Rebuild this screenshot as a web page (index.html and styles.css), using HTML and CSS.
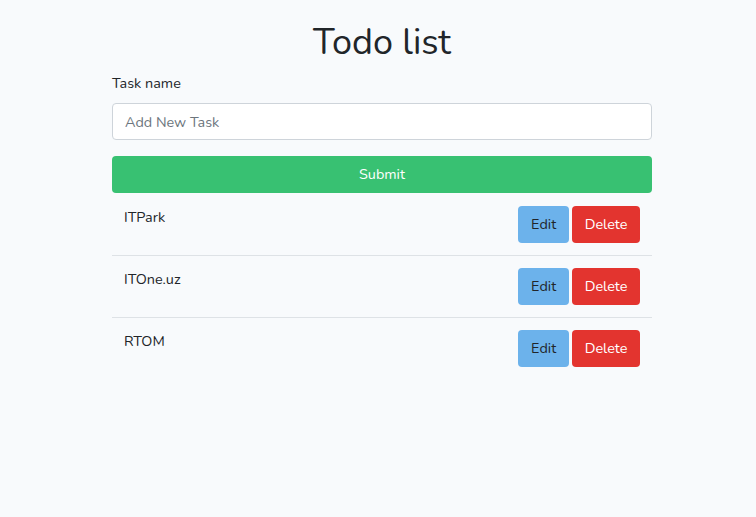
FILE: index.html
```html
<!DOCTYPE html>
<html lang="en">
<head>
<meta charset="utf-8">
<title>Todo list</title>
<link rel="stylesheet" href="styles.css">
</head>
<body>
<div class="container">
  <h1 class="title">Todo list</h1>
  <form class="form">
    <div class="form-group">
      <label class="label" for="task">Task name</label>
      <input class="input" id="task" type="text" placeholder="Add New Task">
    </div>
    <button class="btn btn-submit" type="button">Submit</button>
  </form>
  <ul class="list">
    <li class="item">
      <span class="item-name">ITPark</span>
      <div class="actions">
        <button class="btn btn-edit" type="button">Edit</button>
        <button class="btn btn-delete" type="button">Delete</button>
      </div>
    </li>
    <li class="item">
      <span class="item-name">ITOne.uz</span>
      <div class="actions">
        <button class="btn btn-edit" type="button">Edit</button>
        <button class="btn btn-delete" type="button">Delete</button>
      </div>
    </li>
    <li class="item">
      <span class="item-name">RTOM</span>
      <div class="actions">
        <button class="btn btn-edit" type="button">Edit</button>
        <button class="btn btn-delete" type="button">Delete</button>
      </div>
    </li>
  </ul>
</div>
</body>
</html>
```
FILE: styles.css
```css
* { box-sizing: border-box; }
html, body { margin: 0; padding: 0; }
body {
  background: #f8fafc;
  color: #212529;
  font-family: "Nunito", "Lato", "Open Sans", sans-serif;
  font-size: 14.4px;
  line-height: 1.6;
}
.container {
  width: 548px;
  margin: 0 auto;
  padding: 0 0 0 8px;
}
.title {
  margin: 0;
  padding-top: 21px;
  font-size: 36px;
  font-weight: 400;
  line-height: 1.2;
  text-align: center;
  margin-bottom: 8px;
}
.form-group { margin-bottom: 16px; }
.label {
  display: block;
  margin-bottom: 8px;
}
.input {
  display: block;
  width: 100%;
  height: 37px;
  padding: 6px 12px;
  font: inherit;
  color: #495057;
  background: #fff;
  border: 1px solid #ced4da;
  border-radius: 4px;
}
.input::placeholder { color: #6c757d; opacity: 1; }
.btn {
  display: inline-block;
  font: inherit;
  padding: 6px 12px;
  border: 1px solid transparent;
  border-radius: 4px;
  line-height: 1.6;
  cursor: pointer;
}
.btn-submit {
  display: block;
  width: 100%;
  background: #38c172;
  color: #fff;
}
.list {
  list-style: none;
  margin: 0;
  padding: 1px 0 0;
}
.item {
  display: flex;
  justify-content: space-between;
  align-items: flex-start;
  padding: 12px;
  border-bottom: 1px solid #dee2e6;
}
.item:last-child { border-bottom: none; }
.actions { display: flex; gap: 3px; }
.btn-edit { background: #6cb2eb; color: #212529; }
.btn-delete { background: #e3342f; color: #fff; padding: 6px 11.5px; }
```
